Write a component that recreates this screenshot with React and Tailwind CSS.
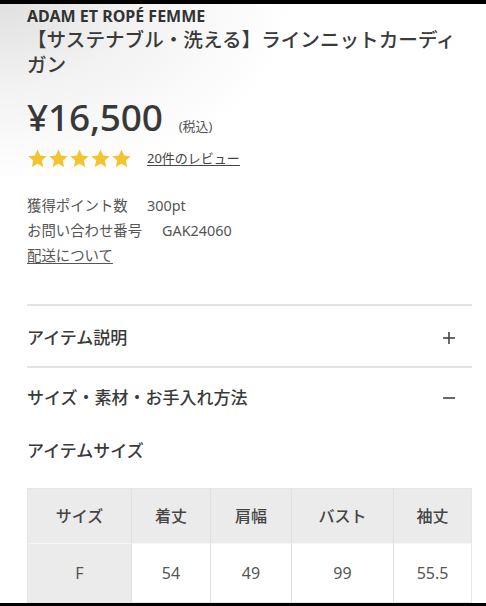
import React from 'react';

const COLS = [
  { label: 'サイズ', value: 'F', w: 'w-[103px]' },
  { label: '着丈', value: '54', w: 'w-[79px]' },
  { label: '肩幅', value: '49', w: 'w-[81px]' },
  { label: 'バスト', value: '99', w: 'w-[102px]' },
  { label: '袖丈', value: '55.5', w: 'flex-1' },
];

function Star() {
  return (
    <svg viewBox="0 0 24 24" className="w-[21px] h-[21px]" fill="#f4c430">
      <path d="M12 1.8l3.1 6.9 7.4.7-5.6 5 1.7 7.4L12 17.9l-6.6 3.9 1.7-7.4-5.6-5 7.4-.7z" />
    </svg>
  );
}

function Sign({ plus }) {
  return (
    <svg viewBox="0 0 14 14" className="w-[14px] h-[14px] mr-[16px]" stroke="#444" strokeWidth="1.6">
      <line x1="1" y1="7" x2="13" y2="7" />
      {plus && <line x1="7" y1="1" x2="7" y2="13" />}
    </svg>
  );
}

export default function App() {
  return (
    <div
      className="w-[486px] h-[606px] overflow-hidden flex flex-col bg-white text-[#333]"
      style={{ fontFamily: '"Noto Sans", "Noto Sans CJK JP", sans-serif' }}
    >
      <div className="h-[4px] bg-black shrink-0" />
      <div className="flex-1 min-h-0 overflow-hidden flex flex-col pl-[27px] pr-[14px] bg-[radial-gradient(ellipse_60%_30%_at_0%_0%,#e0e0e0_0%,#f2f2f2_45%,#ffffff_100%)]">
        {/* brand + title */}
        <div className="text-[16px] font-bold leading-[20px] mt-[2px] text-[#333]">ADAM ET ROPÉ FEMME</div>
        <div className="text-[19.6px] leading-[25px] font-medium text-[#3a3a3a] mt-[1px]">
          【サステナブル・洗える】ラインニットカーディガン
        </div>

        {/* price */}
        <div className="flex items-end mt-[20px] h-[40px]">
          <span className="text-[37px] leading-[40px] font-medium text-[#383838] tracking-[-0.2px]">¥16,500</span>
          <span className="text-[13px] leading-[16px] ml-[16px] mb-[3px] text-[#555]">(税込)</span>
        </div>

        {/* rating */}
        <div className="flex items-center mt-[10px] h-[24px]">
          <div className="flex">
            <Star /><Star /><Star /><Star /><Star />
          </div>
          <span className="ml-[15px] text-[13px] underline text-[#444] underline-offset-2">20件のレビュー</span>
        </div>

        {/* info */}
        <div className="mt-[23px] text-[14.4px] leading-[25px] text-[#555]">
          <div className="flex">
            <span className="w-[120px]">獲得ポイント数</span>
            <span>300pt</span>
          </div>
          <div className="flex">
            <span className="w-[135px]">お問い合わせ番号</span>
            <span>GAK24060</span>
          </div>
          <div>
            <span className="underline underline-offset-2">配送について</span>
          </div>
        </div>

        {/* accordions */}
        <div className="mt-[36px] border-t-2 border-[#e3e3e3] shrink-0">
          <div className="flex items-center justify-between h-[62px] pt-[4px] border-b-2 border-[#e3e3e3]">
            <span className="text-[17px] font-medium text-[#3a3a3a]">アイテム説明</span>
            <Sign plus />
          </div>
          <div className="flex items-center justify-between h-[60px]">
            <span className="text-[17px] font-medium text-[#3a3a3a]">サイズ・素材・お手入れ方法</span>
            <Sign />
          </div>
        </div>

        <div className="mt-[11px] text-[17px] leading-[24px] font-medium text-[#3a3a3a]">アイテムサイズ</div>

        {/* size table */}
        <div className="mt-[25px] flex border border-[#e6e6e6] shrink-0">
          {COLS.map((c, i) => (
            <div key={c.label} className={`${c.w} flex flex-col ${i > 0 ? 'border-l border-[#e0e0e0]' : ''}`}>
              <div className="h-[55px] bg-[#ebebeb] flex items-center justify-center text-[16px] font-medium text-[#444] border-b border-[#f4f4f4]">
                {c.label}
              </div>
              <div
                className={`h-[58px] flex items-center justify-center text-[16px] text-[#555] ${
                  i === 0 ? 'bg-[#ebebeb]' : 'bg-white'
                }`}
              >
                {c.value}
              </div>
            </div>
          ))}
        </div>
      </div>
      <div className="h-[3px] bg-black shrink-0" />
    </div>
  );
}
